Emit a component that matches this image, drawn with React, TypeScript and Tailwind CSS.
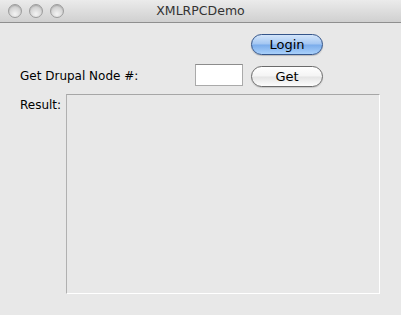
const font = { fontFamily: '"DejaVu Sans", "Lucida Grande", sans-serif' };

const Light = () => (
  <span className="block h-[14px] w-[14px] rounded-full border border-[#9c9c9c] bg-[radial-gradient(circle_at_50%_75%,#f4f4f4_0%,#d6d6d6_55%,#bdbdbd_100%)] shadow-[inset_0_1px_1px_rgba(0,0,0,0.15)]" />
);

const App = () => {
  return (
    <main
      className="flex h-[315px] w-[401px] flex-col overflow-hidden bg-[#e8e8e8] text-[12px] text-black"
      style={font}
    >
      <div className="relative flex h-[23px] shrink-0 items-center border-b border-[#8f8f8f] bg-gradient-to-b from-[#ebebeb] to-[#d0d0d0]">
        <div className="absolute left-[8px] top-[4px] flex gap-[7px]">
          <Light />
          <Light />
          <Light />
        </div>
        <h1 className="w-full text-center text-[12.5px] leading-none text-[#333]">
          XMLRPCDemo
        </h1>
      </div>

      <div className="mt-[11px] flex justify-end pr-[78px]">
        <button className="h-[21px] w-[72px] rounded-full border border-[#34558a] bg-[linear-gradient(to_bottom,#d3e5fa_0%,#a3c6f2_48%,#7aaceb_52%,#a9d0fa_100%)] text-[13px] leading-none text-black shadow-[0_1px_1px_rgba(0,0,0,0.2)]">
          Login
        </button>
      </div>

      <div className="mt-[9px] flex h-[23px] items-center pl-[20px]">
        <span className="w-[175px]">Get Drupal Node #:</span>
        <input
          type="text"
          className="h-[22px] w-[48px] self-start border border-[#aaaaaa] border-t-[#8c8c8c] bg-white outline-none"
        />
        <button className="ml-[8px] mt-[2px] h-[21px] w-[72px] rounded-full border border-[#6b6b6b] bg-[linear-gradient(to_bottom,#ffffff_0%,#f4f4f4_48%,#e4e4e4_52%,#fdfdfd_100%)] text-[13px] leading-none text-black shadow-[0_1px_1px_rgba(0,0,0,0.15)]">
          Get
        </button>
      </div>

      <div className="mt-[7px] flex pl-[20px]">
        <span className="w-[46px] pt-[2px]">Result:</span>
        <div className="h-[200px] w-[314px] border border-b-white border-l-[#b0b0b0] border-r-white border-t-[#a6a6a6] bg-[#e8e8e8]" />
      </div>
    </main>
  );
};

export default App;
